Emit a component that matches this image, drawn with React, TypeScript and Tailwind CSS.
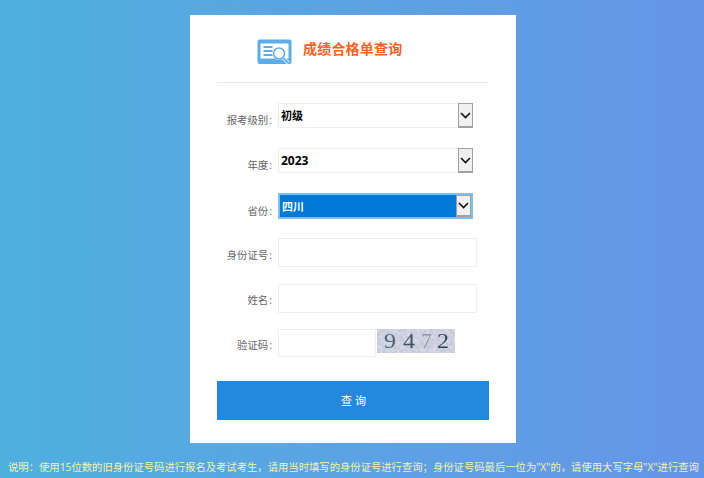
const font = "font-['Open_Sans','Noto_Sans_CJK_SC',sans-serif]"

const note = '说明\uFF1A使用15位数的旧身份证号码进行报名及考试考生\uFF0C请用当时填写的身份证号进行查询\uFF1B身份证号码最后一位为"X"的\uFF0C请使用大写字母"X"进行查询'

function FakeSelect({ value, size = 'text-[11px]', focused }: { value: string; size?: string; focused?: boolean }) {
  return (
    <div className={`flex w-[195px] ${focused ? 'h-[26px] border-2 border-[#7cc0ee]' : 'h-[25px] border border-[#eeeeee]'} bg-white`}>
      <div className={`flex flex-1 items-center pl-[2px] font-bold ${size} ${focused ? 'bg-[#0078d7] pt-[2px] text-white' : 'pt-[1px] text-black'}`}>{value}</div>
      <div className={`flex w-[15px] items-center justify-center border border-[#a0a0a0] border-b-2 bg-[#f0f0f0] ${focused ? '' : '-my-px -mr-px'}`}>
        <svg width="11" height="7" viewBox="0 0 11 7" fill="none">
          <path d="M1 1l4.5 4.5L10 1" stroke="#111" strokeWidth="1.6" />
        </svg>
      </div>
    </div>
  )
}

function Row({ label, mb, pb, children }: { label: string; mb: string; pb: string; children: React.ReactNode }) {
  return (
    <div className={`flex ${mb}`}>
      <label className={`w-[55px] shrink-0 self-end ${pb} text-right text-[10.4px] leading-[16px] text-[#666666]`}>
        {label}<span className="ml-[1px]">:</span>
      </label>
      <div className="ml-[6px]">{children}</div>
    </div>
  )
}

function TextBox({ w, h = 'h-[29px]' }: { w: string; h?: string }) {
  return <input className={`${w} ${h} border border-[#eeeeee] bg-white outline-none`} />
}

function Captcha() {
  return (
    <svg width="78" height="24" viewBox="0 0 78 24" className="ml-[1px] block">
      <defs>
        <filter id="noise" x="0" y="0" width="100%" height="100%">
          <feTurbulence type="fractalNoise" baseFrequency="0.3" numOctaves="3" seed="7" />
          <feColorMatrix values="0 0 0 0 0.55  0 0 0 0 0.58  0 0 0 0 0.70  2.6 0 0 0 -0.75" />
        </filter>
        <filter id="soft">
          <feGaussianBlur stdDeviation="0.45" />
        </filter>
      </defs>
      <rect width="78" height="24" fill="#d9dce6" />
      <rect width="78" height="24" filter="url(#noise)" />
      <g fontFamily="'Liberation Serif', serif" fontSize="20" filter="url(#soft)">
        <text x="7" y="19" fill="#4b6672" textLength="12" lengthAdjust="spacingAndGlyphs">9</text>
        <text x="26" y="19" fill="#3f5464" textLength="12" lengthAdjust="spacingAndGlyphs">4</text>
        <text x="44" y="19" fill="#8f9aa6" textLength="11" lengthAdjust="spacingAndGlyphs">7</text>
        <text x="60" y="19" fill="#2f4558" textLength="12" lengthAdjust="spacingAndGlyphs">2</text>
      </g>
    </svg>
  )
}

export default function App() {
  return (
    <div className={`h-[478px] w-[704px] overflow-hidden bg-gradient-to-r from-[#4eb0de] to-[#6595e8] pt-[15px] ${font}`}>
      <div className="ml-[190px] h-[428px] w-[326px] bg-white px-[27px]">
        <div className="flex h-[68px] items-start border-b border-[#e8e8e8] pl-[40px] pt-[24px]">
          <svg width="35" height="26" viewBox="0 0 35 26" fill="none" className="shrink-0">
            <rect x="0.5" y="0.5" width="34" height="24.5" rx="2" fill="#5dacea" />
            <rect x="3.5" y="4.5" width="28" height="15" fill="#fff" />
            <path d="M6.5 8h9M6.5 12h9M6.5 16h9" stroke="#5dacea" strokeWidth="1.8" />
            <circle cx="22" cy="14.5" r="6.5" fill="#fff" />
            <circle cx="22" cy="14.5" r="5.5" stroke="#5dacea" strokeWidth="1.5" fill="#fff" />
            <path d="M26 19l5.5 5" stroke="#fff" strokeWidth="3.5" />
            <path d="M26 19l5.5 5" stroke="#5dacea" strokeWidth="1.8" />
          </svg>
          <h1 className="ml-[11px] -mt-[1px] text-[14px] font-bold leading-[21px] tracking-[0.2px] text-[#ff5f1f]">成绩合格单查询</h1>
        </div>
        <div className="pt-[20px]">
          <Row label="报考级别" mb="mb-[20px]" pb="pb-0"><FakeSelect value="初级" /></Row>
          <Row label="年度" mb="mb-[20px]" pb="pb-0"><FakeSelect value="2023" size="text-[12px]" /></Row>
          <Row label="省份" mb="mb-[19px]" pb="pb-0"><FakeSelect value="四川" focused /></Row>
          <Row label="身份证号" mb="mb-[17px]" pb="pb-[4px]"><TextBox w="w-[199px]" /></Row>
          <Row label="姓名" mb="mb-[16px]" pb="pb-[5px]"><TextBox w="w-[199px]" /></Row>
          <Row label="验证码" mb="mb-[24px]" pb="pb-[4px]">
            <div className="flex items-start">
              <TextBox w="w-[98px]" h="h-[28px]" />
              <Captcha />
            </div>
          </Row>
        </div>
        <button className="h-[39px] w-[272px] bg-[#2488df] pt-[2px] pl-[1px] text-[11px] text-white">查&nbsp;询</button>
      </div>
      <p className="mt-[16px] whitespace-nowrap pl-[8px] text-[10.33px] leading-[16px] text-[#f4f3a8]">{note}</p>
    </div>
  )
}
